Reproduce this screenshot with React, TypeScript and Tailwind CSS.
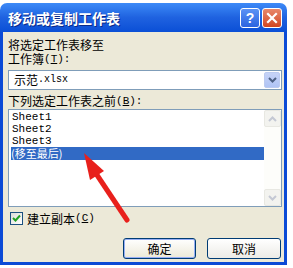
import React from "react";

const cjk = { fontFamily: '"Noto Sans CJK SC", "Liberation Sans", sans-serif' };
const mono = { fontFamily: '"Liberation Mono", "Noto Sans CJK SC", monospace' };

function Arrow({ dir }: { dir: "up" | "down" }) {
  return (
    <svg width="9" height="6" viewBox="0 0 9 6">
      {dir === "up" ? (
        <path d="M1 5 L4.5 1.5 L8 5" stroke="#c4c8d4" strokeWidth="2" fill="none" />
      ) : (
        <path d="M1 1 L4.5 4.5 L8 1" stroke="#c4c8d4" strokeWidth="2" fill="none" />
      )}
    </svg>
  );
}

export default function App() {
  return (
    <div className="w-[293px] h-[268px] bg-white relative overflow-hidden" style={cjk}>
      <div className="mt-[3px] w-[287px] flex flex-col">
        {/* Title bar */}
        <div className="h-[29px] rounded-t-[7px] bg-gradient-to-b from-[#3d8af7] via-[#1f62e0] to-[#0a4fd6] flex items-center pl-[8px] pr-[5px]">
          <span className="text-white font-bold text-[14px] leading-none [text-shadow:1px_1px_0_#0a2a8a]">
            移动或复制工作表
          </span>
          <div className="ml-auto flex gap-[2px]">
            <div className="w-[20px] h-[20px] rounded-[3px] border border-white bg-gradient-to-b from-[#5b92f5] to-[#2b63e0] flex items-center justify-center text-white font-bold text-[14px] leading-none" style={{ fontFamily: '"Liberation Sans", sans-serif' }}>
              ?
            </div>
            <div className="w-[20px] h-[20px] rounded-[3px] border border-white bg-gradient-to-b from-[#e8876a] to-[#d2451f] flex items-center justify-center">
              <svg width="12" height="12" viewBox="0 0 12 12">
                <path d="M2 2 L10 10 M10 2 L2 10" stroke="white" strokeWidth="2.2" strokeLinecap="square" />
              </svg>
            </div>
          </div>
        </div>
        {/* Body */}
        <div className="h-[233px] bg-[#ece9d8] border-x-[3px] border-b-[3px] border-[#0b4ad6] flex flex-col pl-[5px] pr-[2px] pt-[6px]">
          <div className="h-[14px] flex items-center text-[12px] leading-none text-black">将选定工作表移至</div>
          <div className="h-[14px] flex items-center text-[12px] leading-none text-black">
            工作簿<span style={mono} className="text-[11px] leading-none">(<span className="underline">T</span>):</span>
          </div>
          {/* Combo */}
          <div className="mt-[4px] h-[20px] bg-white border border-[#7f9db9] flex items-center">
            <span className="pl-[5px] text-[12px] leading-none flex items-center">
              示范<span style={mono} className="text-[10px] leading-none">.xlsx</span>
            </span>
            <div className="ml-auto mr-[1px] w-[16px] h-[16px] rounded-[2px] bg-gradient-to-b from-[#c6d3f7] to-[#b0c4f5] border border-[#bccbf0] flex items-center justify-center">
              <svg width="9" height="6" viewBox="0 0 9 6">
                <path d="M1 1 L4.5 4.5 L8 1" stroke="#4d6185" strokeWidth="2" fill="none" />
              </svg>
            </div>
          </div>
          <div className="mt-[4px] h-[14px] flex items-center text-[12px] leading-none text-black">
            下列选定工作表之前<span style={mono} className="text-[11px] leading-none">(<span className="underline">B</span>):</span>
          </div>
          {/* Listbox */}
          <div className="mt-[1px] h-[98px] bg-white border border-[#7f9db9] flex">
            <div className="flex-1 pt-[1px] pl-[2px] text-[11px] leading-none" style={mono}>
              <div className="pl-[1px] h-[12px] flex items-center">Sheet1</div>
              <div className="pl-[1px] h-[12px] flex items-center">Sheet2</div>
              <div className="pl-[1px] h-[12px] flex items-center">Sheet3</div>
              <div className="h-[13px] bg-[#316ac5] text-white flex items-center">
                <span style={cjk} className="text-[11px] leading-none">(移至最后)</span>
              </div>
            </div>
            <div className="w-[17px] bg-[#fdfdfa] flex flex-col justify-between">
              <div className="h-[17px] rounded-[2px] bg-[#f3f3ef] border border-[#e8e8e2] flex items-center justify-center">
                <Arrow dir="up" />
              </div>
              <div className="h-[17px] rounded-[2px] bg-[#f3f3ef] border border-[#e8e8e2] flex items-center justify-center">
                <Arrow dir="down" />
              </div>
            </div>
          </div>
          {/* Checkbox */}
          <div className="mt-[5px] flex items-center h-[13px] pl-[2px]">
            <div className="w-[13px] h-[13px] border border-[#1c5180] bg-gradient-to-br from-[#dcdcd7] to-white flex items-center justify-center">
              <svg width="9" height="9" viewBox="0 0 9 9">
                <path d="M1 4 L3.5 6.5 L8 1.5" stroke="#21a121" strokeWidth="2" fill="none" />
              </svg>
            </div>
            <span className="ml-[4px] text-[12px] leading-none flex items-center">
              建立副本<span style={mono} className="text-[11px] leading-none">(<span className="underline">C</span>)</span>
            </span>
          </div>
          {/* Buttons */}
          <div className="mt-[13px] flex justify-end gap-[11px] pr-[1px]">
            <div className="w-[73px] h-[21px] rounded-[3px] border border-[#003c74] bg-gradient-to-b from-white to-[#ece9d8] shadow-[inset_0_0_0_1px_#97aef4] flex items-center justify-center text-[12px] leading-none">
              确定
            </div>
            <div className="w-[74px] h-[21px] rounded-[3px] border border-[#003c74] bg-gradient-to-b from-white to-[#ecebe6] flex items-center justify-center text-[12px] leading-none">
              取消
            </div>
          </div>
        </div>
      </div>
      {/* Red annotation arrow */}
      <svg className="absolute left-0 top-0 pointer-events-none" width="293" height="268" viewBox="0 0 293 268">
        <line x1="127" y1="220" x2="97" y2="175" stroke="#e8201c" strokeWidth="5" strokeLinecap="round" />
        <polygon points="84,153 104,171 90,180" fill="#e8201c" />
      </svg>
    </div>
  );
}
